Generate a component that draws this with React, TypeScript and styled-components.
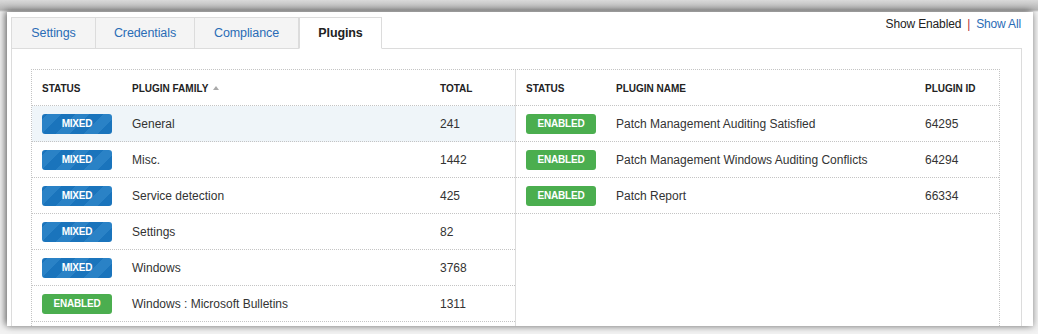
import styled, {createGlobalStyle} from 'styled-components';

const GlobalStyle = createGlobalStyle`
  html, body {
    margin: 0;
    padding: 0;
    background: #f2f2f2;
    font-family: 'Liberation Sans', Arial, Helvetica, sans-serif;
    color: #333;
  }
`;

const Page = styled.div`
  width: 1038px;
  height: 334px;
  overflow: hidden;
  background: linear-gradient(#d9d9d9 0px, #b5b5b5 10px, #f2f2f2 12px);
  padding: 12px 5px 0 7px;
  box-sizing: border-box;
`;

const Window = styled.div`
  width: 1026px;
  height: 314px;
  background: #fff;
  box-shadow: -2px -1px 7px rgba(0, 0, 0, 0.55), 2px 2px 6px rgba(0, 0, 0, 0.12);
  padding: 5px 11px 0 4px;
  box-sizing: border-box;
  overflow: hidden;
`;

const TopBar = styled.div`
  display: flex;
  align-items: flex-end;
  justify-content: space-between;
`;

const Tabs = styled.div`
  display: flex;
`;

const Tab = styled.div<{$active?: boolean; $w: number}>`
  width: ${(p) => p.$w}px;
  height: 32px;
  box-sizing: border-box;
  display: flex;
  align-items: center;
  justify-content: center;
  font-size: 12.5px;
  letter-spacing: -0.1px;
  border: 1px solid #dcdcdc;
  border-left: ${(p) => (p.$active ? '1px solid #dcdcdc' : 'none')};
  border-bottom: ${(p) => (p.$active ? '1px solid #fff' : '1px solid #dcdcdc')};
  background: ${(p) => (p.$active ? '#fff' : '#f4f4f4')};
  color: ${(p) => (p.$active ? '#222' : '#2a6cb6')};
  font-weight: ${(p) => (p.$active ? 700 : 400)};
  margin-bottom: -1px;
  position: relative;
  z-index: 1;

  &:first-child {
    border-left: 1px solid #dcdcdc;
  }
`;

const Filters = styled.div`
  align-self: flex-start;
  font-size: 12px;
  letter-spacing: -0.15px;
  margin-right: 1px;
  line-height: 14px;
  display: flex;
  gap: 6px;
`;

const FilterLink = styled.span<{$link?: boolean}>`
  color: ${(p) => (p.$link ? '#2a6cb6' : '#222')};
`;

const FilterSep = styled.span`
  color: #b0303a;
`;

const Panel = styled.div`
  border: 1px solid #dcdcdc;
  padding: 20px 21px 0 19px;
  height: 300px;
  box-sizing: border-box;
`;

const Grid = styled.div`
  display: grid;
  grid-template-columns: 484px 1fr;
  border: 1px dotted #c4c4c4;
  border-bottom: none;
  height: 400px;
`;

const Side = styled.div<{$divider?: boolean}>`
  border-right: ${(p) => (p.$divider ? '1px solid #dcdcdc' : 'none')};
`;

const Row = styled.div<{$cols: string; $head?: boolean; $hl?: boolean}>`
  display: grid;
  grid-template-columns: ${(p) => p.$cols};
  align-items: center;
  height: 36px;
  box-sizing: border-box;
  border-bottom: 1px dotted #c4c4c4;
  background: ${(p) => (p.$hl ? '#eff5f9' : 'transparent')};
  font-size: ${(p) => (p.$head ? '10px' : '12px')};
  font-weight: ${(p) => (p.$head ? 700 : 400)};
  color: ${(p) => (p.$head ? '#222' : '#333')};
  padding-top: ${(p) => (p.$head ? '1px' : '0')};
`;

const Cell = styled.div`
  padding-left: 10px;
  white-space: nowrap;
`;

const SortArrow = styled.span`
  display: inline-block;
  margin-left: 5px;
  width: 0;
  height: 0;
  border-left: 3px solid transparent;
  border-right: 3px solid transparent;
  border-bottom: 4px solid #aaa;
  vertical-align: 2px;
`;

const Badge = styled.div<{$kind: 'mixed' | 'enabled'}>`
  width: 70px;
  height: 20px;
  border-radius: 3px;
  display: flex;
  align-items: center;
  justify-content: center;
  color: #fff;
  font-size: 10px;
  font-weight: 700;
  letter-spacing: -0.2px;
  background: ${(p) =>
    p.$kind === 'mixed'
      ? 'repeating-linear-gradient(-45deg, #1a74bc 0px, #1a74bc 10px, #2a82c6 10px, #2a82c6 20px)'
      : '#4bae4f'};
`;

const leftCols = '90px 308px 1fr';
const rightCols = '90px 309px 1fr';

const families = [
  {status: 'mixed', name: 'General', total: '241'},
  {status: 'mixed', name: 'Misc.', total: '1442'},
  {status: 'mixed', name: 'Service detection', total: '425'},
  {status: 'mixed', name: 'Settings', total: '82'},
  {status: 'mixed', name: 'Windows', total: '3768'},
  {status: 'enabled', name: 'Windows : Microsoft Bulletins', total: '1311'},
] as const;

const plugins = [
  {name: 'Patch Management Auditing Satisfied', id: '64295'},
  {name: 'Patch Management Windows Auditing Conflicts', id: '64294'},
  {name: 'Patch Report', id: '66334'},
];

export default function App() {
  return (
    <>
      <GlobalStyle />
      <Page>
        <Window>
          <TopBar>
            <Tabs>
              <Tab $w={85}>Settings</Tab>
              <Tab $w={99}>Credentials</Tab>
              <Tab $w={104}>Compliance</Tab>
              <Tab $w={83} $active>
                Plugins
              </Tab>
            </Tabs>
            <Filters>
              <FilterLink>Show Enabled</FilterLink>
              <FilterSep>|</FilterSep>
              <FilterLink $link>Show All</FilterLink>
            </Filters>
          </TopBar>
          <Panel>
            <Grid>
              <Side $divider>
                <Row $cols={leftCols} $head>
                  <Cell>STATUS</Cell>
                  <Cell>
                    PLUGIN FAMILY
                    <SortArrow />
                  </Cell>
                  <Cell>TOTAL</Cell>
                </Row>
                {families.map((f, i) => (
                  <Row $cols={leftCols} $hl={i === 0} key={f.name}>
                    <Cell>
                      <Badge $kind={f.status}>{f.status.toUpperCase()}</Badge>
                    </Cell>
                    <Cell>{f.name}</Cell>
                    <Cell>{f.total}</Cell>
                  </Row>
                ))}
                <Row $cols={leftCols} />
              </Side>
              <Side>
                <Row $cols={rightCols} $head>
                  <Cell>STATUS</Cell>
                  <Cell>PLUGIN NAME</Cell>
                  <Cell>PLUGIN ID</Cell>
                </Row>
                {plugins.map((p) => (
                  <Row $cols={rightCols} key={p.id}>
                    <Cell>
                      <Badge $kind="enabled">ENABLED</Badge>
                    </Cell>
                    <Cell>{p.name}</Cell>
                    <Cell>{p.id}</Cell>
                  </Row>
                ))}
              </Side>
            </Grid>
          </Panel>
        </Window>
      </Page>
    </>
  );
}
